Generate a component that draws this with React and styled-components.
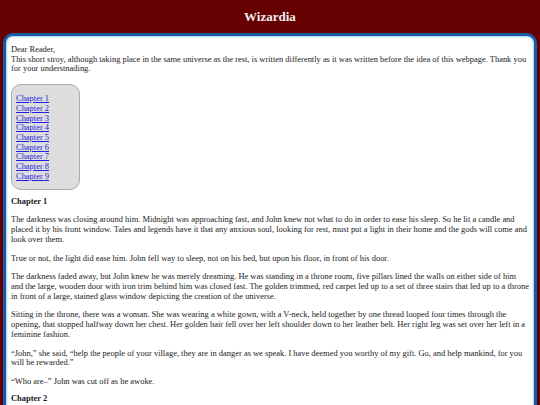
import React from "react";
import styled, { createGlobalStyle } from "styled-components";

const GlobalStyle = createGlobalStyle`
  html, body {
    margin: 0;
    padding: 0;
    background: #660000;
  }
  body {
    font-family: "Liberation Serif", "Times New Roman", serif;
    font-size: 8.45px;
    color: #1a1a1a;
  }
`;

const Page = styled.div`
  background: #660000;
  min-height: 405px;
  padding: 0 3px;
`;

const Title = styled.h1`
  margin: 0;
  height: 33px;
  display: flex;
  align-items: center;
  justify-content: center;
  color: #f2eeee;
  font-size: 13px;
  font-weight: bold;
`;

const Main = styled.main`
  background: #fff;
  border: 3px solid #1b5aa2;
  border-radius: 10px;
  box-shadow: inset 0 0 2px 1px #9ad6f2;
  padding: 9px 5px 12px;
`;

const Intro = styled.p`
  margin: 0 0 10px;
  line-height: 1.15;
`;

const Toc = styled.nav`
  display: flex;
  flex-direction: column;
  align-items: flex-start;
  box-sizing: border-box;
  width: 69px;
  margin-bottom: 2px;
  background: #dddddd;
  border: 1px solid #aaaaaa;
  border-radius: 10px;
  padding: 9px 4px 7px;
  line-height: 1.15;
`;

const TocLink = styled.a`
  color: #1f1fe0;
  text-decoration: underline;
`;

const ChapterTitle = styled.h4`
  font-size: 1em;
  line-height: 1.15;
  margin: 7px 0 9px;
`;

const Para = styled.p`
  margin: 0 0 9px;
  line-height: 1.15;

  &:last-child {
    margin-bottom: 0;
  }
`;

const chapters = [1, 2, 3, 4, 5, 6, 7, 8, 9];

const chapterOne = [
  "The darkness was closing around him. Midnight was approaching fast, and John knew not what to do in order to ease his sleep. So he lit a candle and placed it by his front window. Tales and legends have it that any anxious soul, looking for rest, must put a light in their home and the gods will come and look over them.",
  "True or not, the light did ease him. John fell way to sleep, not on his bed, but upon his floor, in front of his door.",
  "The darkness faded away, but John knew he was merely dreaming. He was standing in a throne room, five pillars lined the walls on either side of him and the large, wooden door with iron trim behind him was closed fast. The golden trimmed, red carpet led up to a set of three stairs that led up to a throne in front of a large, stained glass window depicting the creation of the universe.",
  "Sitting in the throne, there was a woman. She was wearing a white gown, with a V-neck, held together by one thread looped four times through the opening, that stopped halfway down her chest. Her golden hair fell over her left shoulder down to her leather belt. Her right leg was set over her left in a feminine fashion.",
  "\u201CJohn,\u201D she said, \u201Chelp the people of your village, they are in danger as we speak. I have deemed you worthy of my gift. Go, and help mankind, for you will be rewarded.\u201D",
  "\u201CWho are\u2013\u201D John was cut off as he awoke.",
];

const App = () => {
  return (
    <Page>
      <GlobalStyle />
      <Title>Wizardia</Title>
      <Main>
        <Intro>
          Dear Reader,
          <br />
          This short stroy, although taking place in the same universe as the
          rest, is written differently as it was written before the idea of
          this webpage. Thank you for your understnading.
        </Intro>
        <Toc>
          {chapters.map((n) => (
            <TocLink href={`#chapter${n}`} key={n}>
              Chapter {n}
            </TocLink>
          ))}
        </Toc>
        <section id="chapter1">
          <ChapterTitle>Chapter 1</ChapterTitle>
          {chapterOne.map((text, index) => (
            <Para key={index}>{text}</Para>
          ))}
        </section>
        <section id="chapter2">
          <ChapterTitle>Chapter 2</ChapterTitle>
        </section>
      </Main>
    </Page>
  );
};

export default App;
